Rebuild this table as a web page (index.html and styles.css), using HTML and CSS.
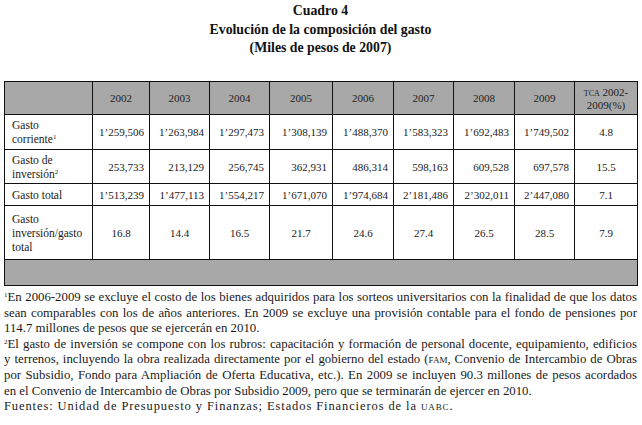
FILE: index.html
```html
<!DOCTYPE html>
<html lang="es">
<head>
<meta charset="utf-8">
<link rel="stylesheet" href="styles.css">
</head>
<body>
<div class="page">
  <div class="title">
    <div>Cuadro 4</div>
    <div>Evolución de la composición del gasto</div>
    <div>(Miles de pesos de 2007)</div>
  </div>
  <table class="data">
    <colgroup>
      <col class="c-label"><col class="c57"><col class="c60"><col class="c60"><col class="c63"><col class="c61"><col class="c60"><col class="c61"><col class="c60"><col class="c63">
    </colgroup>
    <tr class="head">
      <td></td><td>2002</td><td>2003</td><td>2004</td><td>2005</td><td>2006</td><td>2007</td><td>2008</td><td>2009</td>
      <td class="tca"><span class="sc">tca</span> 2002-<br>2009(%)</td>
    </tr>
    <tr class="r1">
      <td class="label">Gasto<br>corriente<sup>1</sup></td>
      <td class="num">1’259,506</td><td class="num">1’263,984</td><td class="num">1’297,473</td><td class="num">1’308,139</td><td class="num">1’488,370</td><td class="num">1’583,323</td><td class="num">1’692,483</td><td class="num">1’749,502</td><td class="pct">4.8</td>
    </tr>
    <tr class="r2">
      <td class="label">Gasto de<br>inversión<sup>2</sup></td>
      <td class="num">253,733</td><td class="num">213,129</td><td class="num">256,745</td><td class="num">362,931</td><td class="num">486,314</td><td class="num">598,163</td><td class="num">609,528</td><td class="num">697,578</td><td class="pct">15.5</td>
    </tr>
    <tr class="r3">
      <td class="label">Gasto total</td>
      <td class="num">1’513,239</td><td class="num">1’477,113</td><td class="num">1’554,217</td><td class="num">1’671,070</td><td class="num">1’974,684</td><td class="num">2’181,486</td><td class="num">2’302,011</td><td class="num">2’447,080</td><td class="pct">7.1</td>
    </tr>
    <tr class="r4">
      <td class="label">Gasto<br>inversión/gasto<br>total</td>
      <td class="pct">16.8</td><td class="pct">14.4</td><td class="pct">16.5</td><td class="pct">21.7</td><td class="pct">24.6</td><td class="pct">27.4</td><td class="pct">26.5</td><td class="pct">28.5</td><td class="pct">7.9</td>
    </tr>
    <tr class="foot">
      <td colspan="10"></td>
    </tr>
  </table>
  <div class="notes">
    <span class="ln j"><sup>1</sup>En 2006-2009 se excluye el costo de los bienes adquiridos para los sorteos universitarios con la finalidad de que los datos</span>
    <span class="ln j">sean comparables con los de años anteriores. En 2009 se excluye una provisión contable para el fondo de pensiones por</span>
    <span class="ln">114.7 millones de pesos que se ejercerán en 2010.</span>
    <span class="ln j"><sup>2</sup>El gasto de inversión se compone con los rubros: capacitación y formación de personal docente, equipamiento, edificios</span>
    <span class="ln j">y terrenos, incluyendo la obra realizada directamente por el gobierno del estado (<span class="sc">fam</span>, Convenio de Intercambio de Obras</span>
    <span class="ln j">por Subsidio, Fondo para Ampliación de Oferta Educativa, etc.). En 2009 se incluyen 90.3 millones de pesos acordados</span>
    <span class="ln">en el Convenio de Intercambio de Obras por Subsidio 2009, pero que se terminarán de ejercer en 2010.</span>
    <span class="ln src">Fuentes: Unidad de Presupuesto y Finanzas; Estados Financieros de la <span class="sc">uabc</span>.</span>
  </div>
</div>
</body>
</html>
```

FILE: styles.css
```css
html, body {
  margin: 0;
  padding: 0;
  background: #fff;
}
body {
  font-family: "Liberation Serif", "Times New Roman", serif;
  color: #1a1a1a;
}
.page {
  width: 633px;
  padding: 2px 0 0 4px;
}
.title {
  text-align: center;
  font-weight: bold;
  font-size: 13.8px;
  line-height: 18.5px;
  color: #111;
  height: 79px;
}
.data {
  border-collapse: collapse;
  table-layout: fixed;
  width: 633px;
  font-size: 11px;
  border: 1px solid #111;
}
.c-label { width: 88px; }
.c57 { width: 57px; }
.c60 { width: 60px; }
.c61 { width: 61px; }
.c63 { width: 63px; }
.data td {
  border: 1px solid #111;
  padding: 0;
  line-height: 14px;
  vertical-align: middle;
}
.head td {
  background: #a8a8a8;
  text-align: center;
  height: 31px;
  color: #222;
}
.head .tca { line-height: 13px; padding-top: 1px; }
.r1 td { height: 34px; }
.r2 td { height: 33px; }
.r3 td { height: 21px; }
.r4 td { height: 53px; }
.foot td {
  background: #a8a8a8;
  height: 25px;
}
.data td.label {
  text-align: left;
  padding-left: 7px;
  font-size: 11.5px;
}
.data td.num {
  text-align: right;
  padding-right: 5px;
}
.data td.pct {
  text-align: center;
}
sup {
  font-size: 7px;
  line-height: 0;
  vertical-align: 4px;
}
.sc {
  font-variant: small-caps;
  text-transform: lowercase;
}
.notes {
  font-size: 12.8px;
  line-height: 15.6px;
  padding-top: 4px;
  color: #1a1a1a;
}
.ln {
  display: block;
  white-space: nowrap;
}
.ln.j {
  text-align: justify;
  text-align-last: justify;
}
.src {
  letter-spacing: 0.9px;
  font-size: 12.5px;
}
```
